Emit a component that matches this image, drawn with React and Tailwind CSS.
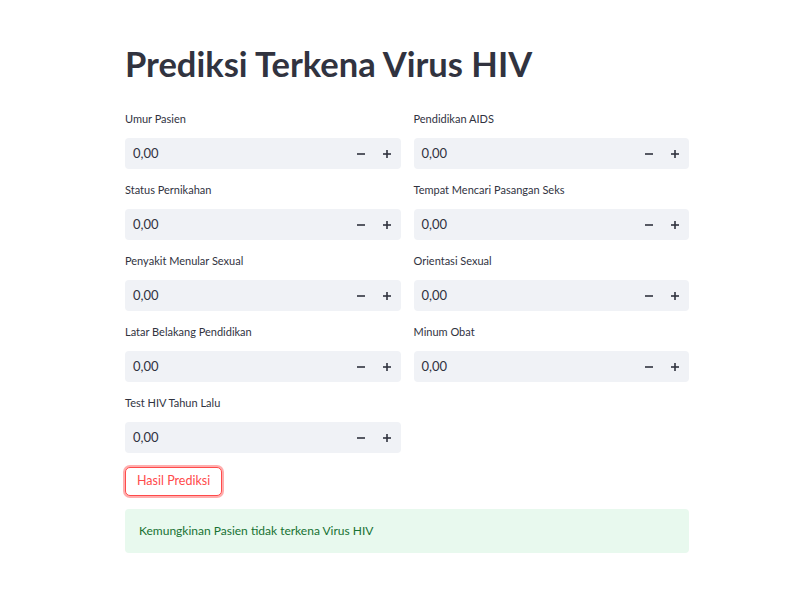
const fields = [
  ["Umur Pasien", "Pendidikan AIDS"],
  ["Status Pernikahan", "Tempat Mencari Pasangan Seks"],
  ["Penyakit Menular Sexual", "Orientasi Sexual"],
  ["Latar Belakang Pendidikan", "Minum Obat"],
  ["Test HIV Tahun Lalu", null],
];

const NumberInput = ({ label }) => (
  <div className="flex flex-col">
    <label className="h-[18px] text-[11px] leading-[18px] text-[#31333f] mb-[10px]">
      {label}
    </label>
    <div className="flex items-center h-[31px] rounded bg-[#f0f2f6]">
      <span className="flex-1 pl-[8px] text-[13px] text-[#31333f]">0,00</span>
      <button className="w-[26px] h-full flex items-center justify-center">
        <svg width="8" height="8" viewBox="0 0 8 8">
          <rect x="0" y="3.2" width="8" height="1.6" fill="#31333f" />
        </svg>
      </button>
      <button className="w-[26px] h-full flex items-center justify-center mr-[1px]">
        <svg width="8" height="8" viewBox="0 0 8 8">
          <rect x="0" y="3.2" width="8" height="1.6" fill="#31333f" />
          <rect x="3.2" y="0" width="1.6" height="8" fill="#31333f" />
        </svg>
      </button>
    </div>
  </div>
);

export default function App() {
  return (
    <div className="min-h-[607px] bg-white" style={{ fontFamily: "Lato, sans-serif" }}>
      <div className="w-[564px] ml-[125px] pt-[40px]">
        <h1 className="text-[34.5px] font-bold text-[#31333f] leading-[48px] mb-[22px]">
          Prediksi Terkena Virus HIV
        </h1>
        <div className="flex flex-col gap-[12px]">
          {fields.map(([a, b], i) => (
            <div key={i} className="grid grid-cols-2 gap-[13px]">
              <NumberInput label={a} />
              {b ? <NumberInput label={b} /> : <div />}
            </div>
          ))}
        </div>
        <button className="block mt-[14px] h-[29px] px-[11px] rounded-[5px] border border-[#ff4b4b] text-[#ff4b4b] text-[12.5px] bg-white shadow-[0_0_0_2px_rgba(255,75,75,0.45)]">
          Hasil Prediksi
        </button>
        <div className="mt-[13px] h-[44px] rounded bg-[#e8f9ee] flex items-center px-[14px] text-[12px] text-[#177233]">
          Kemungkinan Pasien tidak terkena Virus HIV
        </div>
      </div>
    </div>
  );
}
